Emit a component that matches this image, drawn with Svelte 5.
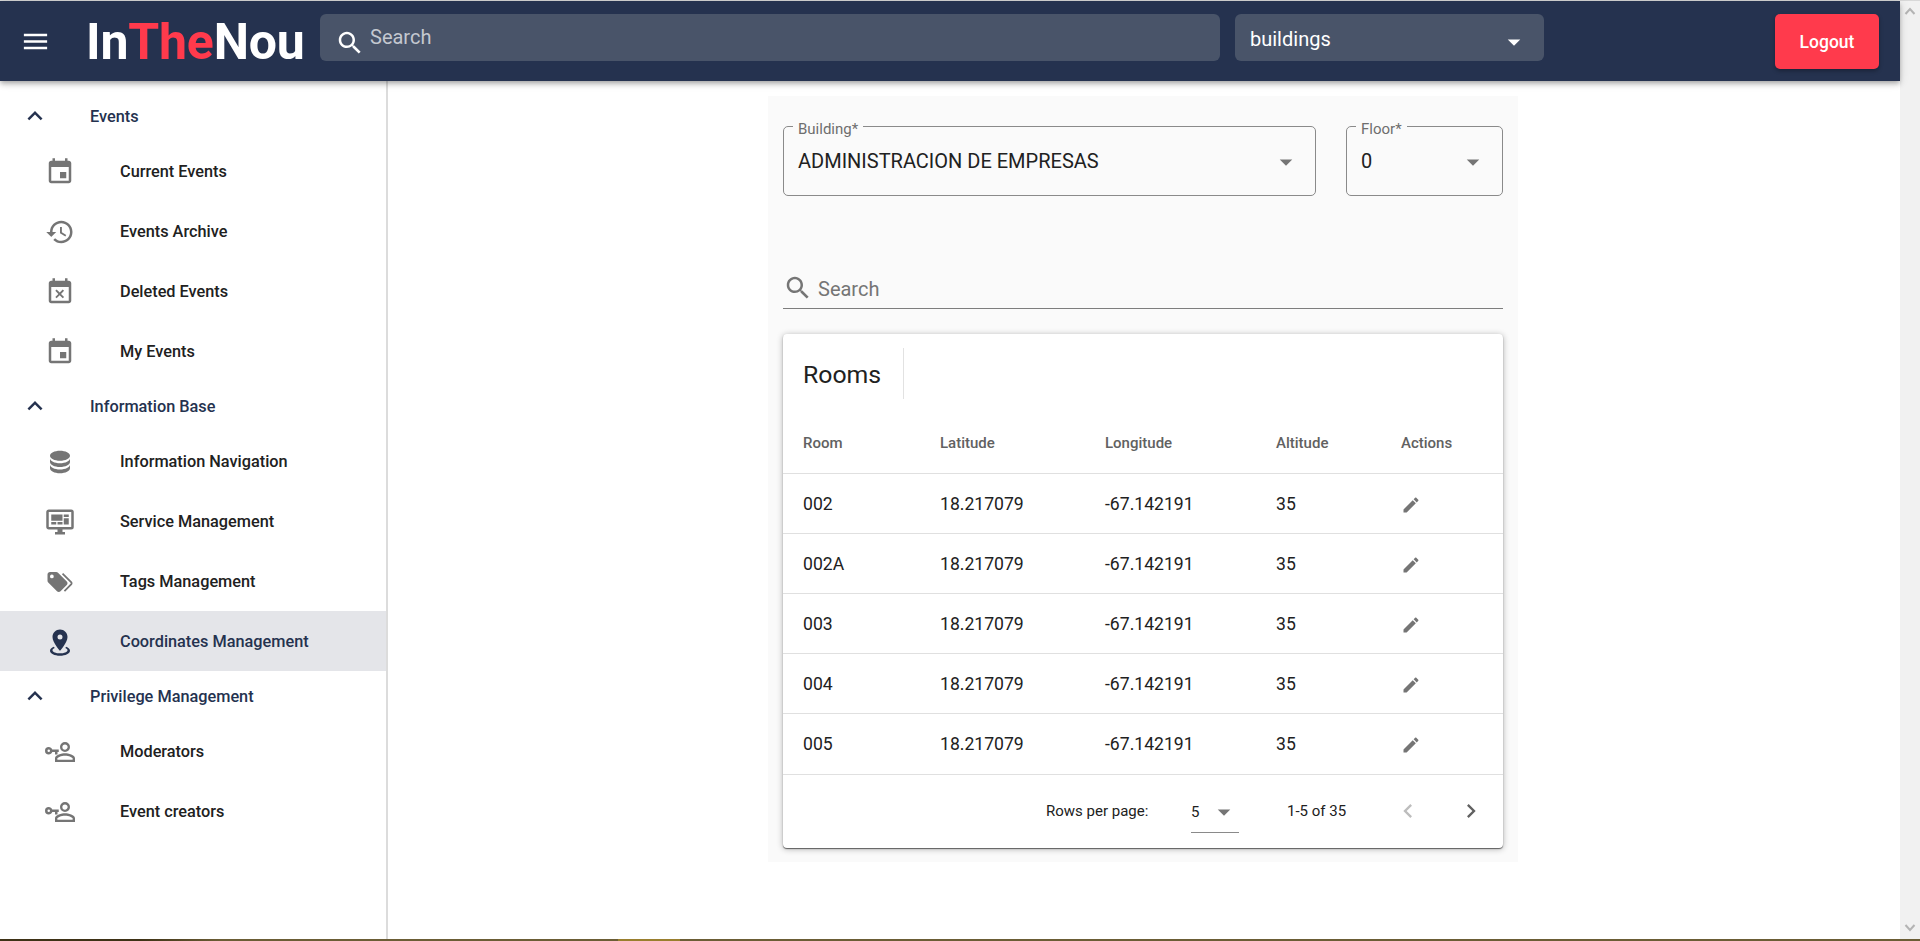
<script>
  const icons = {
    event: "M17 12h-5v5h5v-5zM16 1v2H8V1H6v2H5c-1.11 0-1.99.9-1.99 2L3 19c0 1.1.89 2 2 2h14c1.1 0 2-.9 2-2V5c0-1.1-.9-2-2-2h-1V1h-2zm3 18H5V8h14v11z",
    history: "M13 3c-4.97 0-9 4.03-9 9H1l3.89 3.89.07.14L9 12H6c0-3.87 3.13-7 7-7s7 3.13 7 7-3.13 7-7 7c-1.93 0-3.68-.79-4.94-2.06l-1.42 1.42C8.27 19.99 10.51 21 13 21c4.97 0 9-4.03 9-9s-4.03-9-9-9zm-1 5v5l4.28 2.54.72-1.21-3.5-2.08V8H12z",
    busy: "M9.31 17l2.44-2.44L14.19 17l1.06-1.06-2.44-2.44 2.44-2.44L14.19 10l-2.44 2.44L9.31 10l-1.06 1.06 2.44 2.44-2.44 2.44L9.31 17zM19 3h-1V1h-2v2H8V1H6v2H5c-1.11 0-1.99.9-1.99 2L3 19c0 1.1.89 2 2 2h14c1.1 0 2-.9 2-2V5c0-1.1-.9-2-2-2zm0 16H5V8h14v11z",
    database: "M12,3C7.58,3 4,4.79 4,7C4,9.21 7.58,11 12,11C16.42,11 20,9.21 20,7C20,4.79 16.42,3 12,3M4,9V12C4,14.21 7.58,16 12,16C16.42,16 20,14.21 20,12V9C20,11.21 16.42,13 12,13C7.58,13 4,11.21 4,9M4,14V17C4,19.21 7.58,21 12,21C16.42,21 20,19.21 20,17V14C20,16.21 16.42,18 12,18C7.58,18 4,16.21 4,14Z",
    monitor: "M21,16V4H3V16H21M21,2A2,2 0 0,1 23,4V16A2,2 0 0,1 21,18H14V20H16V22H8V20H10V18H3C1.89,18 1,17.1 1,16V4C1,2.89 1.89,2 3,2H21M5,6H14V11H5V6M15,6H19V8H15V6M19,9V14H15V9H19M5,12H9V14H5V12M10,12H14V14H10V12Z",
    tags: "M5.5,9A1.5,1.5 0 0,0 7,7.5A1.5,1.5 0 0,0 5.5,6A1.5,1.5 0 0,0 4,7.5A1.5,1.5 0 0,0 5.5,9M17.41,11.58C17.77,11.94 18,12.44 18,13C18,13.55 17.78,14.05 17.41,14.41L12.41,19.41C12.05,19.77 11.55,20 11,20C10.45,20 9.95,19.78 9.58,19.41L2.59,12.42C2.22,12.05 2,11.55 2,11V6C2,4.89 2.89,4 4,4H9C9.55,4 10.05,4.22 10.41,4.58L17.41,11.58M13.54,5.71L14.54,4.71L21.41,11.58C21.78,11.94 22,12.45 22,13C22,13.55 21.78,14.05 21.42,14.41L16.04,19.79L15.04,18.79L20.75,13L13.54,5.71Z",
    marker: "M12,2C15.31,2 18,4.66 18,7.95C18,12.41 12,19 12,19C12,19 6,12.41 6,7.95C6,4.66 8.69,2 12,2M12,6A2,2 0 0,0 10,8A2,2 0 0,0 12,10A2,2 0 0,0 14,8A2,2 0 0,0 12,6M20,19C20,21.21 16.42,23 12,23C7.58,23 4,21.21 4,19C4,17.71 5.22,16.56 7.11,15.83L7.75,16.74C6.67,17.19 6,17.81 6,18.5C6,19.88 8.69,21 12,21C15.31,21 18,19.88 18,18.5C18,17.81 17.33,17.19 16.25,16.74L16.89,15.83C18.78,16.56 20,17.71 20,19Z",
    userKey: "M5.83,10C5.42,8.83 4.31,8 3,8A3,3 0 0,0 0,11A3,3 0 0,0 3,14C4.31,14 5.42,13.17 5.83,12H8V14H10V12H11V10H5.83M3,12A1,1 0 0,1 2,11A1,1 0 0,1 3,10A1,1 0 0,1 4,11A1,1 0 0,1 3,12M16,4A4,4 0 0,0 12,8A4,4 0 0,0 16,12A4,4 0 0,0 20,8A4,4 0 0,0 16,4M16,10.1A2.1,2.1 0 0,1 13.9,8A2.1,2.1 0 0,1 16,5.9C17.16,5.9 18.1,6.84 18.1,8C18.1,9.16 17.16,10.1 16,10.1M16,13C13.33,13 8,14.33 8,17V20H24V17C24,14.33 18.67,13 16,13M22.1,18.1H9.9V17C9.9,16.36 13,14.9 16,14.9C19,14.9 22.1,16.36 22.1,17V18.1Z",
    menu: "M3 18h18v-2H3v2zm0-5h18v-2H3v2zm0-7v2h18V6H3z",
    less: "M12 8l-6 6 1.41 1.41L12 10.83l4.59 4.58L18 14z",
    search: "M15.5 14h-.79l-.28-.27C15.41 12.59 16 11.11 16 9.5 16 5.91 13.09 3 9.5 3S3 5.91 3 9.5 5.91 16 9.5 16c1.61 0 3.09-.59 4.23-1.57l.27.28v.79l5 4.99L20.49 19l-4.99-5zm-6 0C7.01 14 5 11.99 5 9.5S7.01 5 9.5 5 14 7.01 14 9.5 11.99 14 9.5 14z",
    drop: "M7 10l5 5 5-5z",
    edit: "M3 17.25V21h3.75L17.81 9.94l-3.75-3.75L3 17.25zM20.71 7.04c.39-.39.39-1.02 0-1.41l-2.34-2.34c-.39-.39-1.02-.39-1.41 0l-1.83 1.83 3.75 3.75 1.83-1.83z",
    left: "M15.41 7.41L14 6l-6 6 6 6 1.41-1.41L10.83 12z",
    right: "M10 6L8.59 7.41 13.17 12l-4.58 4.58L10 18l6-6z"
  };

  const nav = [
    { title: "Events", items: [
      { label: "Current Events", icon: "event" },
      { label: "Events Archive", icon: "history" },
      { label: "Deleted Events", icon: "busy" },
      { label: "My Events", icon: "event" }
    ] },
    { title: "Information Base", items: [
      { label: "Information Navigation", icon: "database" },
      { label: "Service Management", icon: "monitor" },
      { label: "Tags Management", icon: "tags" },
      { label: "Coordinates Management", icon: "marker", active: true }
    ] },
    { title: "Privilege Management", items: [
      { label: "Moderators", icon: "userKey" },
      { label: "Event creators", icon: "userKey" }
    ] }
  ];

  const rooms = ["002", "002A", "003", "004", "005"];
</script>

{#snippet icon(name, size, cls = "")}
  <svg class={cls} width={size} height={size} viewBox="0 0 24 24" fill="currentColor"><path d={icons[name]} /></svg>
{/snippet}

<div class="page">
  <div class="top-line"></div>
  <div class="window">
    <div class="viewport">
      <header class="appbar">
        <span class="menu">{@render icon("menu", 31)}</span>
        <span class="logo">In<span class="red">The</span>Nou</span>
        <div class="bar-search">
          {@render icon("search", 30)}
          <span>Search</span>
        </div>
        <div class="bar-select">
          <span>buildings</span>
          {@render icon("drop", 30)}
        </div>
        <button class="logout" type="button">Logout</button>
      </header>

      <div class="content">
        <nav class="sidebar">
          {#each nav as group}
            <div class="group-title">
              <span class="chev">{@render icon("less", 30)}</span>
              <span>{group.title}</span>
            </div>
            {#each group.items as item}
              <div class="nav-item" class:active={item.active}>
                <span class="nav-icon">{@render icon(item.icon, 30)}</span>
                <span>{item.label}</span>
              </div>
            {/each}
          {/each}
        </nav>

        <main class="main">
          <section class="panel">
            <div class="fields">
              <div class="field building">
                <span class="legend">Building*</span>
                <span class="value">ADMINISTRACION DE EMPRESAS</span>
                {@render icon("drop", 30)}
              </div>
              <div class="field floor">
                <span class="legend">Floor*</span>
                <span class="value">0</span>
                {@render icon("drop", 30)}
              </div>
            </div>

            <div class="filter">
              {@render icon("search", 30)}
              <span>Search</span>
            </div>

            <div class="card">
              <div class="toolbar"><h2>Rooms</h2></div>
              <table>
                <colgroup>
                  <col style="width:157px" />
                  <col style="width:165px" />
                  <col style="width:171px" />
                  <col style="width:125px" />
                  <col />
                </colgroup>
                <thead>
                  <tr>
                    <th>Room</th><th>Latitude</th><th>Longitude</th><th>Altitude</th><th>Actions</th>
                  </tr>
                </thead>
                <tbody>
                  {#each rooms as room}
                    <tr>
                      <td>{room}</td>
                      <td>18.217079</td>
                      <td>-67.142191</td>
                      <td>35</td>
                      <td class="edit">{@render icon("edit", 20)}</td>
                    </tr>
                  {/each}
                </tbody>
              </table>
              <div class="pager">
                <span class="rows-label">Rows per page:</span>
                <div class="rows-select">
                  <span>5</span>
                  {@render icon("drop", 30)}
                </div>
                <span class="range">1-5 of 35</span>
                <span class="page-btn off">{@render icon("left", 28)}</span>
                <span class="page-btn">{@render icon("right", 28)}</span>
              </div>
            </div>
          </section>
        </main>
      </div>
    </div>

    <div class="scrollbar">
      <svg width="12" height="8" viewBox="0 0 12 8" fill="none" stroke="#b4b4b4" stroke-width="2"><path d="M1.5 7 6 2l4.5 5" /></svg>
      <svg width="12" height="8" viewBox="0 0 12 8" fill="none" stroke="#b4b4b4" stroke-width="2"><path d="M1.5 1 6 6l4.5-5" /></svg>
    </div>
  </div>
  <div class="taskbar"></div>
</div>

<style>
  :global(body) {
    margin: 0;
    font-family: Roboto, "Liberation Sans", sans-serif;
    background: #fff;
    overflow: hidden;
  }

  .page {
    height: 941px;
    display: flex;
    flex-direction: column;
  }

  .top-line {
    height: 1px;
    background: #d8d8d8;
  }

  .window {
    flex: 1;
    display: flex;
    min-height: 0;
  }

  .viewport {
    flex: 1;
    min-width: 0;
    display: flex;
    flex-direction: column;
  }

  .appbar {
    height: 80px;
    flex-shrink: 0;
    background: #25324f;
    display: flex;
    align-items: flex-start;
    position: relative;
    z-index: 2;
    box-shadow: 0 2px 4px -1px rgba(0, 0, 0, 0.2), 0 4px 5px 0 rgba(0, 0, 0, 0.14), 0 1px 10px 0 rgba(0, 0, 0, 0.12);
  }

  .menu {
    display: flex;
    color: #fff;
    margin: 25px 0 0 20px;
  }

  .logo {
    margin: 8px 0 0 35px;
    width: 234px;
    font-size: 50px;
    line-height: 66px;
    font-weight: 700;
    color: #fff;
    letter-spacing: -0.2px;
  }

  .red {
    color: #ff3a4c;
  }

  .bar-search,
  .bar-select {
    height: 47px;
    margin-top: 13px;
    border-radius: 6px;
    background: #495469;
    color: #fff;
    display: flex;
    box-sizing: border-box;
  }

  .bar-search {
    width: 900px;
    padding-left: 15px;
  }

  .bar-search svg {
    margin-top: 14px;
  }

  .bar-search span {
    margin: 11px 0 0 5px;
    font-size: 20px;
    line-height: 24px;
    color: #c4c8d0;
  }

  .bar-select {
    width: 309px;
    margin-left: 15px;
    padding: 0 15px;
    justify-content: space-between;
  }

  .bar-select span {
    font-size: 20px;
    line-height: 24px;
    margin-top: 13px;
  }

  .bar-select svg {
    margin-top: 13px;
  }

  .logout {
    margin: 13px 0 0 231px;
    width: 104px;
    height: 55px;
    border: 0;
    border-radius: 5px;
    background: #ff3a4c;
    color: #fff;
    font: 500 17.5px Roboto, sans-serif;
    box-shadow: 0 2px 4px rgba(0, 0, 0, 0.3);
  }

  .content {
    flex: 1;
    display: flex;
    min-height: 0;
  }

  .sidebar {
    width: 386px;
    flex-shrink: 0;
    padding-top: 10px;
    box-sizing: content-box;
    border-right: 2px solid #dcdcdc;
  }

  .group-title {
    height: 50px;
    display: flex;
    align-items: center;
    color: #25324f;
    font-size: 16.3px;
    font-weight: 500;
  }

  .chev {
    display: flex;
    width: 90px;
    padding-left: 20px;
    box-sizing: border-box;
  }

  .nav-item {
    height: 60px;
    display: flex;
    align-items: center;
    color: #212121;
    font-size: 16.3px;
    font-weight: 500;
  }

  .nav-icon {
    width: 120px;
    padding: 2px 0 0 45px;
    box-sizing: border-box;
    display: flex;
    color: #757575;
  }

  .nav-item.active {
    background: #e4e5e9;
    color: #25324f;
  }

  .active .nav-icon {
    color: #25324f;
  }

  .main {
    flex: 1;
    min-width: 0;
    padding: 15px 2px 0 0;
  }

  .panel {
    width: 720px;
    height: 736px;
    margin: 0 auto;
    padding: 30px 15px 0;
    background: #fafafa;
  }

  .fields {
    display: flex;
    gap: 30px;
  }

  .field {
    position: relative;
    height: 70px;
    box-sizing: border-box;
    border: 1px solid #8a8a8a;
    border-radius: 5px;
    display: flex;
    padding: 22px 14px 0;
    justify-content: space-between;
    color: #212121;
    font-size: 20px;
    line-height: 24px;
  }

  .field svg {
    color: #757575;
    margin-top: -2px;
  }

  .building {
    width: 533px;
  }

  .floor {
    width: 157px;
  }

  .legend {
    position: absolute;
    top: -5px;
    left: 9px;
    padding: 0 5px;
    background: #fafafa;
    color: #6e6e6e;
    font-size: 15px;
    line-height: 14px;
  }

  .filter {
    margin-top: 70px;
    height: 43px;
    box-sizing: border-box;
    border-bottom: 1px solid #7d7d7d;
    display: flex;
    align-items: flex-start;
    color: #757575;
    font-size: 20px;
  }

  .filter svg {
    margin-top: 7px;
  }

  .filter span {
    margin: 9px 0 0 5px;
    line-height: 28px;
  }

  .card {
    margin-top: 25px;
    background: #fff;
    border-radius: 4px;
    box-shadow: 0 1px 1px rgba(0, 0, 0, 0.55), 0 1px 6px rgba(0, 0, 0, 0.3);
  }

  .toolbar {
    padding: 14px 0 0 20px;
    height: 51px;
  }

  h2 {
    margin: 0;
    width: 100px;
    height: 51px;
    border-right: 1px solid #e2e2e2;
    font-size: 24.8px;
    font-weight: 400;
    line-height: 53px;
    color: #212121;
  }

  table {
    width: 100%;
    table-layout: fixed;
    border-collapse: collapse;
  }

  th,
  td {
    padding: 0;
    text-align: left;
    border-bottom: 1px solid #e0e0e0;
  }

  th:first-child,
  td:first-child {
    padding-left: 20px;
  }

  th {
    height: 74px;
    box-sizing: border-box;
    padding-top: 14px;
    color: #616161;
    font-size: 15px;
    font-weight: 500;
  }

  td {
    height: 60px;
    box-sizing: border-box;
    padding-top: 2px;
    color: #212121;
    font-size: 17.6px;
  }

  tr:last-child td {
    height: 61px;
    padding-top: 0;
  }

  .edit {
    color: #757575;
  }

  .edit svg {
    display: block;
    margin-top: 1px;
  }

  tr:last-child .edit svg {
    margin-top: 3px;
  }

  .pager {
    height: 73px;
    display: flex;
    align-items: center;
    color: #212121;
    font-size: 15px;
  }

  .pager > * {
    flex-shrink: 0;
  }

  .rows-label {
    margin-left: 263px;
    width: 145px;
  }

  .rows-select {
    width: 48px;
    height: 42px;
    margin-top: 2px;
    box-sizing: border-box;
    border-bottom: 1px solid #8a8a8a;
    display: flex;
    align-items: center;
    justify-content: space-between;
  }

  .rows-select svg {
    color: #757575;
  }

  .range {
    margin-left: 48px;
    width: 107px;
  }

  .page-btn {
    display: flex;
    width: 63px;
    color: #616161;
  }

  .page-btn:last-child {
    width: 28px;
  }

  .page-btn.off {
    color: #bdbdbd;
  }

  .scrollbar {
    width: 20px;
    flex-shrink: 0;
    background: #f1f1f1;
    display: flex;
    flex-direction: column;
    justify-content: space-between;
    align-items: center;
    padding: 6px 0 7px;
    box-sizing: border-box;
  }

  .taskbar {
    height: 2px;
    background: linear-gradient(to right, #3e3216 0, #3e3216 140px, #6b5d35 220px, #6b5d35 618px, #9a7f2e 618px, #9a7f2e 680px, #6b5d35 680px);
  }
</style>
